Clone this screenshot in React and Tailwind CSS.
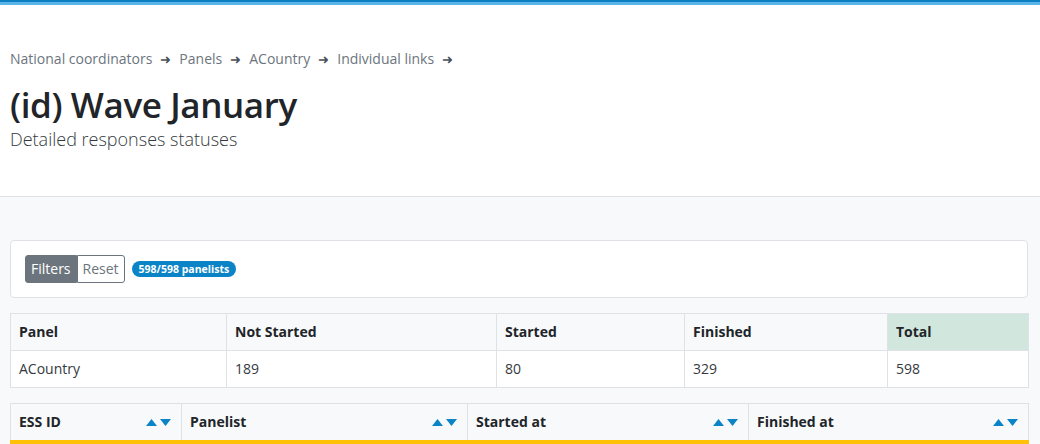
import { Fragment } from 'react';

const crumbs = ['National coordinators', 'Panels', 'ACountry', 'Individual links'];

const summaryCols = [
  { label: 'Panel', w: 'w-[216px]', value: 'ACountry' },
  { label: 'Not Started', w: 'w-[270px]', value: '189' },
  { label: 'Started', w: 'w-[188px]', value: '80' },
  { label: 'Finished', w: 'w-[203px]', value: '329' },
  { label: 'Total', w: 'w-[141px]', value: '598', success: true },
];

const detailCols = [
  { label: 'ESS ID', w: 'w-[171px]' },
  { label: 'Panelist', w: 'w-[286px]' },
  { label: 'Started at', w: 'w-[281px]' },
  { label: 'Finished at', w: 'w-[280px]' },
];

function SortArrows() {
  return (
    <span className="flex items-center gap-[3px]">
      <svg width="11" height="7" viewBox="0 0 11 7">
        <path d="M5.5 0L11 7H0z" fill="#0b84c7" />
      </svg>
      <svg width="11" height="7" viewBox="0 0 11 7">
        <path d="M0 0H11L5.5 7z" fill="#0b84c7" />
      </svg>
    </span>
  );
}

export default function App() {
  return (
    <div className="min-h-screen bg-[#f8f9fa] text-[#212529] font-['Open_Sans',sans-serif]">
      <div className="h-[2px] bg-[#0b7fc1]" />
      <div className="h-[3px] bg-[#5ab4e6]" />

      <header className="bg-white border-b border-[#dee2e6] px-[10px] pt-[43px] h-[192px]">
        <nav className="flex items-center text-[14px] text-[#6c757d] leading-[22px]">
          {crumbs.map((c) => (
            <Fragment key={c}>
              <span>{c}</span>
              <span className="mx-[8px] text-[#495057] text-[13px]">➜</span>
            </Fragment>
          ))}
        </nav>
        <h1 className="mt-[12px] text-[35px] font-semibold leading-[46px] tracking-[-0.4px]">(id) Wave January</h1>
        <p className="-mt-[1px] text-[18px] font-light leading-[24px] text-[#343a40]">Detailed responses statuses</p>
      </header>

      <main className="pl-[10px] pr-[12px] pt-[43px] flex flex-col gap-[15px]">
        <div className="bg-white border border-[#dee2e6] rounded-[4px] px-[14px] py-[14px] flex items-center gap-[7px]">
          <div className="flex text-[14px] leading-[20px]">
            <button className="bg-[#6c757d] text-white border border-[#6c757d] rounded-l-[3px] px-[5px] py-[3px]">
              Filters
            </button>
            <button className="bg-white text-[#6c757d] border border-[#6c757d] rounded-r-[3px] px-[5px] py-[3px]">
              Reset
            </button>
          </div>
          <span className="bg-[#0a84c6] text-white text-[10.5px] font-bold rounded-full px-[7px] leading-[16px]">
            598/598 panelists
          </span>
        </div>

        <table className="border-collapse w-[1018px] text-[14px] leading-[20px] table-fixed">
          <thead>
            <tr>
              {summaryCols.map((c) => (
                <th
                  key={c.label}
                  className={`${c.w} border border-[#dee2e6] text-left font-bold px-[8px] py-[8px] ${c.success ? 'bg-[#d1e7dd]' : 'bg-[#f8f9fa]'}`}
                >
                  {c.label}
                </th>
              ))}
            </tr>
          </thead>
          <tbody>
            <tr>
              {summaryCols.map((c) => (
                <td key={c.label} className="border border-[#dee2e6] bg-white px-[8px] py-[8px] text-[#343a40]">
                  {c.value}
                </td>
              ))}
            </tr>
          </tbody>
        </table>

        <table className="border-collapse w-[1018px] text-[14px] leading-[20px] table-fixed">
          <thead>
            <tr>
              {detailCols.map((c) => (
                <th key={c.label} className={`${c.w} border border-[#dee2e6] bg-[#f8f9fa] text-left font-bold px-[8px] py-[8px]`}>
                  <div className="flex items-center justify-between pr-[2px]">
                    <span>{c.label}</span>
                    <SortArrows />
                  </div>
                </th>
              ))}
            </tr>
          </thead>
          <tbody>
            <tr>
              {detailCols.map((c) => (
                <td key={c.label} className="border border-[#dee2e6] border-t-[#ffc107] border-t-[4px] bg-white h-[30px]" />
              ))}
            </tr>
          </tbody>
        </table>
      </main>
    </div>
  );
}
